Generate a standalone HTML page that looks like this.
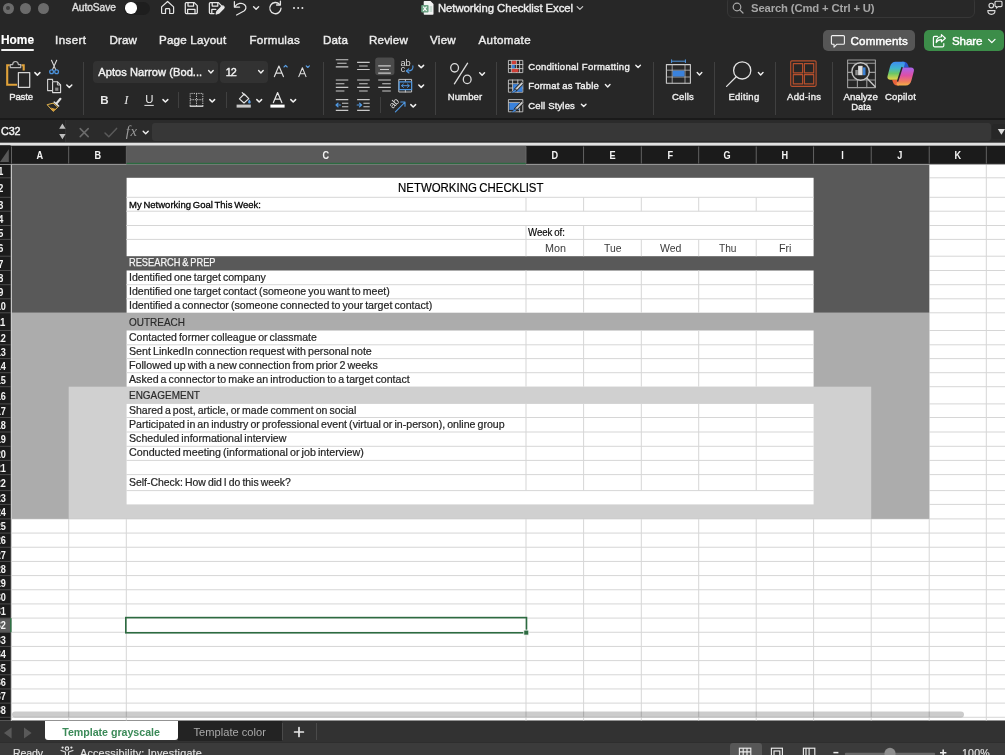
<!DOCTYPE html>
<html><head><meta charset="utf-8"><title>Networking Checklist Excel</title><style>
*{margin:0;padding:0;box-sizing:border-box}
html,body{width:1005px;height:755px;overflow:hidden;background:#272727}
body{position:relative;font-family:"Liberation Sans",sans-serif;-webkit-font-smoothing:antialiased}
.abs{position:absolute}
.grid{position:absolute;left:0;top:0}
.tl{position:absolute;left:0;top:0;width:1005px;height:755px;will-change:transform;pointer-events:none}
.t{position:absolute;white-space:nowrap;line-height:16px;height:16px;font-family:"Liberation Sans",sans-serif}
.ui{font-family:"Liberation Sans",sans-serif}
.dot{position:absolute;width:11px;height:11px;border-radius:50%;background:#6b6b6b}
.tab{font-size:12.4px;color:#ececec;font-weight:bold;letter-spacing:-0.1px}
.lbl{font-size:10.6px;color:#f0f0f0;font-weight:bold;letter-spacing:0px;line-height:14px;height:14px}
.sep{position:absolute;top:62px;width:1px;height:53px;background:#404040}
.h{font-size:10.6px;font-weight:bold;color:#f4f4f4}
.c{font-size:11.4px;color:#2e2e2e;transform-origin:left center;transform:scaleX(0.9);letter-spacing:-0.1px}
.b3{color:#111}
.wk{font-size:10.4px;color:#111}
.day{font-size:11.6px;color:#3a3a3a}
.day,.title{transform:scaleX(0.92)}
.title{font-size:13.4px;color:#000}
.sec{font-size:11.8px;color:#2e2e2e;transform-origin:left center;transform:scaleX(0.9)}
.sec.w{color:#f4f4f4}
</style></head><body>
<!-- ===== TITLE BAR ===== -->
<div class="abs" style="left:0;top:0;width:1005px;height:119px;background:#272727"></div>
<div class="dot" style="left:2.6px;top:2.8px"></div><div class="dot" style="left:20px;top:2.8px"></div><div class="dot" style="left:37.9px;top:2.8px"></div>
<div class="abs" style="left:6.2px;top:6.4px;width:3.8px;height:3.8px;border-radius:50%;background:#3c3c3c"></div>
<div class="abs" style="left:124px;top:1.5px;width:26px;height:13px;border-radius:7px;background:#1e1e1e"></div>
<div class="abs" style="left:125.3px;top:2.3px;width:11.4px;height:11.4px;border-radius:50%;background:#fff"></div>
<svg class="abs" style="left:0;top:0" width="1005" height="56" viewBox="0 0 1005 56" fill="none" stroke="#e6e6e6" stroke-width="1.25" stroke-linecap="round" stroke-linejoin="round">
  <!-- home -->
  <path d="M161.6 6.9 L167.6 1.5 L173.6 6.9 V12.5 a1 1 0 0 1 -1 1 H169.7 V9.5 a0.8 0.8 0 0 0 -0.8 -0.8 h-2.6 a0.8 0.8 0 0 0 -0.8 0.8 V13.5 H162.6 a1 1 0 0 1 -1 -1 Z" stroke-width="1.2"/>
  <!-- save -->
  <path d="M186.3 2.6 h8 l3 3 v7 a1 1 0 0 1 -1 1 h-10 a1 1 0 0 1 -1 -1 v-9 a1 1 0 0 1 1 -1 Z"/>
  <path d="M188 2.8 v3.2 h5.6 v-3.2 M187.6 13.4 v-4 h7.4 v4"/>
  <!-- save as -->
  <path d="M214 13.6 h-3.6 a1 1 0 0 1 -1 -1 v-9 a1 1 0 0 1 1 -1 h8 l3 3 v2.2"/>
  <path d="M212.2 2.8 v3.2 h5.6 v-3.2 M211.8 13.4 v-4 h4"/>
  <path d="M216.2 14 l0.7 -2.6 l5 -5 a1.2 1.2 0 0 1 1.8 1.8 l-5 5 Z" fill="#e6e6e6"/>
  <!-- undo -->
  <path d="M234.4 1.6 v5.4 h5.2" stroke-width="1.25"/>
  <path d="M234.8 6.8 c2.4 -3.6 7.2 -4.6 9.8 -2 c2.2 2.2 1.4 4.6 -0.6 6.2 l-7.4 4" stroke-width="1.25"/>
  <path d="M253.6 6.8 l2.5 2.5 l2.5 -2.5" stroke-width="1.4"/>
  <!-- redo -->
  <path d="M279.6 4.4 a5.6 5.6 0 1 0 1.4 3.8" stroke-width="1.3"/>
  <path d="M280.4 1.2 v3.8 h-3.8" stroke-width="1.3"/>
</svg>
<div class="abs" style="left:292.5px;top:6.8px;width:2.4px;height:2.4px;border-radius:50%;background:#e6e6e6;box-shadow:4.2px 0 0 #e6e6e6,8.4px 0 0 #e6e6e6"></div>

<!-- doc title -->
<svg class="abs" style="left:420px;top:0px" width="16" height="16" viewBox="0 0 16 16">
  <path d="M4.5 1 h6 l3 3 v10 a0.8 0.8 0 0 1 -0.8 0.8 h-8.2 a0.8 0.8 0 0 1 -0.8 -0.8 v-12.2 a0.8 0.8 0 0 1 0.8 -0.8Z" fill="#f3f3f3"/>
  <rect x="1.2" y="5" width="7.4" height="7.4" rx="1" fill="#6aa283"/>
  <path d="M3.2 6.6 l3.4 4.2 M6.6 6.6 l-3.4 4.2" stroke="#fff" stroke-width="1.1"/>
  <path d="M9.6 7 h2.6 M9.6 9 h2.6 M9.6 11 h2.6" stroke="#9cc4ae" stroke-width="0.9"/>
</svg>
<svg class="abs" style="left:574.6px;top:3.2px" width="10" height="10" viewBox="0 0 10 10" fill="none" stroke="#cfcfcf" stroke-width="1.15" stroke-linecap="round" stroke-linejoin="round"><path d="M2.1 3.7 l2.8 2.7 l2.8 -2.7"/></svg>

<!-- search -->
<div class="abs" style="left:727px;top:-4px;width:248px;height:21.6px;border-radius:6px;background:#282828;border:1px solid #373737"></div>
<svg class="abs" style="left:731px;top:1px" width="14" height="14" viewBox="0 0 14 14" fill="none" stroke="#a9a9a9" stroke-width="1.2" stroke-linecap="round"><circle cx="6" cy="6" r="3.8"/><path d="M8.8 8.8 l3.2 3.2"/></svg>
<!-- people icon -->
<svg class="abs" style="left:985px;top:0px" width="20" height="18" viewBox="985 0 20 18" fill="none" stroke="#dadada" stroke-width="1.15" stroke-linecap="round" stroke-linejoin="round"><circle cx="991.3" cy="5.6" r="2.3"/><path d="M987.8 10.6 h7.2 c0 2.4 -1.4 3.8 -3.6 3.8 s-3.6 -1.4 -3.6 -3.8 Z"/><path d="M996 1.2 h5 a1 1 0 0 1 1 1 v3.4 a1 1 0 0 1 -1 1 h-3 l-1.6 1.6 v-1.6 h-0.4 a1 1 0 0 1 -1 -1 v-3.4 a1 1 0 0 1 1 -1 Z" fill="#272727"/></svg>

<!-- ===== RIBBON TABS ===== -->
<div class="abs" style="left:1px;top:48.6px;width:33px;height:2.4px;border-radius:1.2px;background:#f2f2f2"></div>
<!-- comments / share -->
<div class="abs" style="left:822.6px;top:30.4px;width:92.6px;height:20.8px;border-radius:5px;background:#565656"></div>
<svg class="abs" style="left:830px;top:33.5px" width="16" height="15" viewBox="0 0 16 15" fill="none" stroke="#f2f2f2" stroke-width="1.1" stroke-linejoin="round"><path d="M2.4 1.6 h11 a1 1 0 0 1 1 1 v6.6 a1 1 0 0 1 -1 1 h-6.4 l-3 3 v-3 h-1.6 a1 1 0 0 1 -1 -1 v-6.6 a1 1 0 0 1 1 -1 Z"/></svg>
<div class="abs" style="left:924.4px;top:30.4px;width:79.2px;height:20.8px;border-radius:5px;background:#3c8d49"></div>
<svg class="abs" style="left:931px;top:33px" width="17" height="16" viewBox="0 0 17 16" fill="none" stroke="#fff" stroke-width="1.15" stroke-linecap="round" stroke-linejoin="round"><path d="M6.4 3.4 h-2.8 a1.2 1.2 0 0 0 -1.2 1.2 v8 a1.2 1.2 0 0 0 1.2 1.2 h8 a1.2 1.2 0 0 0 1.2 -1.2 v-2"/><path d="M10.4 1.6 l4 3.6 l-4 3.6 v-2.2 c-2.8 0 -4.2 1 -5.2 3 c0 -3.4 1.8 -5.6 5.2 -5.8 Z"/></svg>
<svg class="abs" style="left:987px;top:36px" width="10" height="10" viewBox="0 0 10 10" fill="none" stroke="#fff" stroke-width="1.3" stroke-linecap="round" stroke-linejoin="round"><path d="M1.6 3.4 l3.2 3.2 l3.2 -3.2"/></svg>
<!-- ===== RIBBON ===== -->
<!-- separators -->
<div class="sep" style="left:83px"></div><div class="sep" style="left:323px"></div><div class="sep" style="left:435px"></div><div class="sep" style="left:496px"></div><div class="sep" style="left:653px"></div><div class="sep" style="left:714px"></div><div class="sep" style="left:775px"></div><div class="sep" style="left:832px"></div>
<div class="sep" style="left:178px;top:92px;height:16px"></div><div class="sep" style="left:226px;top:92px;height:16px"></div><div class="sep" style="left:380px;top:97px;height:16px"></div>

<svg class="abs" style="left:0;top:50px" width="1005" height="70" viewBox="0 50 1005 70" fill="none" stroke-linecap="round" stroke-linejoin="round">
  <!-- paste clipboard -->
  <path d="M9.8 65.2 H7.2 V84.8 H17 M21.4 65.2 H23.7 V70.6" stroke="#e0a23a" stroke-width="2.1" stroke-linecap="butt" stroke-linejoin="miter"/>
  <path d="M10.3 67.6 V64.6 H12.7 C12.7 62.5 13.8 61.5 15.5 61.5 C17.2 61.5 18.3 62.5 18.3 64.6 H20.7 V67.6 Z" stroke="#b9b9b9" stroke-width="1.2" fill="#272727"/>
  <rect x="18.4" y="72.5" width="11.3" height="14.8" stroke="#d4d4d4" stroke-width="1.25" fill="#272727"/>
  <path d="M34.9 72.6 l2.5 2.5 l2.5 -2.5" stroke="#f0f0f0" stroke-width="1.5"/>
  <!-- scissors -->
  <path d="M51.5 60.2 l4.2 9.4 M56.7 60.2 l-4.2 9.4" stroke="#dadada" stroke-width="1.1"/>
  <circle cx="51.6" cy="71.8" r="1.9" stroke="#4a90d9" stroke-width="1.3"/><circle cx="56.6" cy="71.8" r="1.9" stroke="#4a90d9" stroke-width="1.3"/>
  <!-- copy -->
  <path d="M51.8 90.6 h-4.2 v-11.2 h5 v1.6" stroke="#d0d0d0" stroke-width="1.1"/>
  <path d="M52.6 81.8 h5 l3 3 v7.8 h-8 Z" stroke="#dcdcdc" stroke-width="1.1" fill="#272727"/>
  <path d="M57.4 82 v3 h3" stroke="#dcdcdc" stroke-width="0.9"/>
  <rect x="55.2" y="87.6" width="3.2" height="3.2" fill="#8a8a8a" stroke="none"/>
  <path d="M66.8 85 l2.5 2.5 l2.5 -2.5" stroke="#f0f0f0" stroke-width="1.5"/>
  <!-- format painter -->
  <path d="M60.4 98.8 l-3.8 4.6" stroke="#e2e2e2" stroke-width="2.2"/>
  <path d="M54.2 102.2 l4.4 3.8" stroke="#e2e2e2" stroke-width="1.6"/>
  <path d="M53.4 103.4 l4.4 3.8 l-4.6 4.2 l-5.8 -6.4 Z" stroke="#e5b64e" stroke-width="1" fill="#272727"/>
  <path d="M50.6 107.4 l5 1.6 l-2.4 2.2 Z" fill="#e0a23a" stroke="none"/>

  <!-- grow/shrink font -->
  <path d="M274.4 76.6 l4.5 -10.6 l4.5 10.6 M276 73.2 h5.8" stroke="#dedede" stroke-width="1.2"/>
  <path d="M284 67 l1.6 -1.7 l1.6 1.7" stroke="#5aa0e6" stroke-width="1.1"/>
  <path d="M298.8 76.6 l3.6 -8.8 l3.6 8.8 M300 73.8 h4.8" stroke="#dedede" stroke-width="1.1"/>
  <path d="M306.2 65.8 l1.6 1.7 l1.6 -1.7" stroke="#5aa0e6" stroke-width="1.1"/>
  <!-- underline bar under U -->
  <path d="M144.8 105.4 h8.6" stroke="#e6e6e6" stroke-width="1"/>
  <path d="M163 99.6 l2.4 2.4 l2.4 -2.4" stroke="#f0f0f0" stroke-width="1.5"/>
  <!-- borders icon -->
  <path d="M190.2 106 V93.4 H202.8 V106 M196.5 93.4 v12.6 M190.2 99.7 h12.6" stroke="#c2c2c2" stroke-width="1" stroke-dasharray="1.3 1" stroke-linecap="butt"/>
  <path d="M189.7 106.2 h13.6" stroke="#d8d8d8" stroke-width="1.4" stroke-linecap="butt"/>
  <path d="M209.8 99.6 l2.4 2.4 l2.4 -2.4" stroke="#f0f0f0" stroke-width="1.5"/>
  <!-- fill bucket -->
  <path d="M239.4 98.8 l4.8 -4.8 l4.6 4.6 l-4.8 4.4 Z" stroke="#e6e6e6" stroke-width="1.1"/>
  <path d="M242.2 92.6 l2.4 2.4" stroke="#e6e6e6" stroke-width="1.1"/>
  <path d="M249.4 99.6 c0.9 1.2 1.3 2 1.3 2.6 a1.3 1.3 0 0 1 -2.6 0 c0 -0.6 0.4 -1.4 1.3 -2.6Z" fill="#5aa0e6" stroke="none"/>
  <rect x="236.6" y="104.6" width="14.2" height="3" fill="#c8c8c8" stroke="none"/>
  <path d="M256.8 99.6 l2.4 2.4 l2.4 -2.4" stroke="#f0f0f0" stroke-width="1.5"/>
  <!-- font colour -->
  <path d="M273.4 102.6 l4.2 -10 l4.2 10 M275 99.2 h5.2" stroke="#e6e6e6" stroke-width="1.2"/>
  <rect x="270.4" y="104.6" width="14.2" height="3" fill="#ffffff" stroke="none"/>
  <path d="M290.8 99.6 l2.4 2.4 l2.4 -2.4" stroke="#f0f0f0" stroke-width="1.5"/>

  <!-- alignment row1 -->
  <g stroke="#c9c9c9" stroke-width="1.1" stroke-linecap="butt">
    <path d="M335.8 59.7 h12.5 M337.2 63.3 h9.4 M335.8 66.9 h12.5"/>
    <path d="M357.1 62.4 h12.6 M359.1 66 h8.6 M357.1 69.5 h12.6"/>
  </g>
  <rect x="375.2" y="57.4" width="19.2" height="17.8" rx="3" fill="#4b4b4b" stroke="none"/>
  <g stroke="#c9c9c9" stroke-width="1.1" stroke-linecap="butt">
    <path d="M378.2 65.9 h12.6 M380 69.5 h9 M378.2 73.1 h12.6"/>
  </g>
  <path d="M418.8 65.4 l2.4 2.4 l2.4 -2.4" stroke="#f0f0f0" stroke-width="1.5"/>
  <path d="M412.9 65.8 c0.5 3.4 -1.2 5.4 -5.6 5.2" stroke="#4f97e0" stroke-width="1.15"/>
  <path d="M408.8 68.8 l-2.4 2.2 l2.6 2" stroke="#4f97e0" stroke-width="1.15"/>
  <!-- row2 -->
  <g stroke="#c9c9c9" stroke-width="1.1" stroke-linecap="butt">
    <path d="M335.8 80 h12.5 M335.8 83.7 h8.6 M335.8 87.4 h12.5 M335.8 91 h8.6"/>
    <path d="M357.1 80 h12.6 M359.1 83.7 h8.6 M357.1 87.4 h12.6 M359.1 91 h8.6"/>
    <path d="M378.2 80 h12.6 M382.2 83.7 h8.6 M378.2 87.4 h12.6 M382.2 91 h8.6"/>
  </g>
  <rect x="399.2" y="79.4" width="12.4" height="12.6" stroke="#c4c4c4" stroke-width="1"/>
  <path d="M405.4 79.4 v12.6" stroke="#c4c4c4" stroke-width="1"/>
  <rect x="399.2" y="81.8" width="12.4" height="7.8" fill="#272727" stroke="#4f97e0" stroke-width="1.15"/>
  <path d="M401.6 85.7 h7.6 M403.4 84 l-1.8 1.7 l1.8 1.7 M407.4 84 l1.8 1.7 l-1.8 1.7" stroke="#4f97e0" stroke-width="1"/>
  <path d="M418.8 85 l2.4 2.4 l2.4 -2.4" stroke="#f0f0f0" stroke-width="1.5"/>
  <!-- row3 -->
  <g stroke="#c9c9c9" stroke-width="1.1" stroke-linecap="butt">
    <path d="M335.8 99.6 h12.5 M342 103.2 h6.3 M342 106.8 h6.3 M335.8 110.4 h12.5"/>
    <path d="M357.1 99.6 h12.6 M363.4 103.2 h6.3 M363.4 106.8 h6.3 M357.1 110.4 h12.6"/>
  </g>
  <path d="M340.4 105 h-4.4 M338 103.2 l-2 1.8 l2 1.8" stroke="#4f97e0" stroke-width="1.2"/>
  <path d="M357.2 105 h4.4 M359.6 103.2 l2 1.8 l-2 1.8" stroke="#4f97e0" stroke-width="1.2"/>
  <path d="M395.4 111.8 l9.4 -9.4 M400.8 102 h4.2 v4.2" stroke="#4f97e0" stroke-width="1.15"/>
  <path d="M410.8 104.6 l2.4 2.4 l2.4 -2.4" stroke="#f0f0f0" stroke-width="1.5"/>

  <!-- percent -->
  <g stroke="#dcdcdc" stroke-width="1.3"><ellipse cx="454.6" cy="67.8" rx="3.9" ry="4.2"/><ellipse cx="467.2" cy="79.4" rx="3.9" ry="4.2"/><path d="M467.6 63.2 l-13.2 20.6"/></g>
  <path d="M479.7 72.8 l2.4 2.4 l2.4 -2.4" stroke="#f0f0f0" stroke-width="1.5"/>

  <!-- conditional formatting -->
  <g stroke="#c6c6c6" stroke-width="0.9"><rect x="508.8" y="60.4" width="14" height="12.2"/><path d="M511.4 60.4 v12.2 M516.4 60.4 v12.2 M519.6 60.4 v12.2 M508.8 64.5 h14 M508.8 68.6 h14"/></g>
  <rect x="511.8" y="60.9" width="4.4" height="3.2" fill="#cf3f38" stroke="none"/><rect x="511.8" y="69" width="6.6" height="3.2" fill="#cf3f38" stroke="none"/><rect x="511.8" y="64.9" width="3" height="3.3" fill="#3a82dc" stroke="none"/>
  <path d="M635.8 65.2 l2.3 2.3 l2.3 -2.3" stroke="#f0f0f0" stroke-width="1.4"/>
  <!-- format as table -->
  <g stroke="#c6c6c6" stroke-width="0.9"><rect x="508.8" y="80" width="14" height="12.2"/><path d="M512.6 80 v12.2 M517.8 80 v12.2 M508.8 83.8 h14 M508.8 88 h14"/></g>
  <rect x="513.1" y="84.2" width="9.3" height="7.6" fill="#3a82dc" stroke="none"/>
  <path d="M522.6 82.6 l-7.4 7.6" stroke="#272727" stroke-width="3.6" stroke-linecap="butt"/>
  <path d="M522.4 82.8 l-6.6 6.8" stroke="#cfcfcf" stroke-width="1.9" stroke-linecap="butt"/>
  <path d="M516 89.2 l-2.4 1.2 l-2.4 2.4 c1.8 0.4 3.6 -0.2 4.8 -1.6 Z" fill="#4a90e2" stroke="#272727" stroke-width="0.5"/>
  <path d="M605.4 84.6 l2.3 2.3 l2.3 -2.3" stroke="#f0f0f0" stroke-width="1.4"/>
  <!-- cell styles -->
  <g stroke="#c6c6c6" stroke-width="0.9"><rect x="508.8" y="99.6" width="14" height="12.2"/><path d="M508.8 102.4 h14 M519.6 102.4 v9.4"/></g>
  <rect x="509.3" y="102.9" width="9.8" height="7" fill="#3a82dc" stroke="none"/>
  <path d="M522.6 102.2 l-7.4 7.6" stroke="#272727" stroke-width="3.6" stroke-linecap="butt"/>
  <path d="M522.4 102.4 l-6.6 6.8" stroke="#cfcfcf" stroke-width="1.9" stroke-linecap="butt"/>
  <path d="M516 108.8 l-2.4 1.2 l-2.4 2.4 c1.8 0.4 3.6 -0.2 4.8 -1.6 Z" fill="#4a90e2" stroke="#272727" stroke-width="0.5"/>
  <path d="M581.4 104.2 l2.3 2.3 l2.3 -2.3" stroke="#f0f0f0" stroke-width="1.4"/>

  <!-- cells -->
  <path d="M671.6 59.8 v2.8 M685.4 59.8 v2.8 M671.6 61.2 h13.8" stroke="#4f97e0" stroke-width="1"/>
  <g stroke="#cdcdcd" stroke-width="1.1"><rect x="666.4" y="64.6" width="24" height="18.6"/></g><g stroke="#bdbdbd" stroke-width="0.8"><path d="M672.2 64.6 v18.6 M685 64.6 v18.6 M666.4 70.2 h24 M666.4 77 h24"/></g>
  <rect x="672.7" y="70.7" width="11.8" height="5.8" fill="#3a82dc" stroke="none"/>
  <path d="M697.2 72.6 l2.3 2.3 l2.3 -2.3" stroke="#f0f0f0" stroke-width="1.4"/>
  <!-- editing -->
  <g stroke="#e2e2e2" stroke-width="1.3"><circle cx="742.2" cy="70.4" r="8.6"/><path d="M736 77 l-9.4 9.4"/></g>
  <path d="M758.4 72.6 l2.3 2.3 l2.3 -2.3" stroke="#f0f0f0" stroke-width="1.4"/>
  <!-- add-ins -->
  <g stroke="#b8502d" stroke-width="1.15"><rect x="790.7" y="60.9" width="25.4" height="25.4" rx="1.2"/><rect x="793.3" y="63.6" width="9.3" height="9.3"/><rect x="804.4" y="63.6" width="9.3" height="9.3"/><rect x="793.3" y="74.6" width="9.3" height="9.3"/><rect x="804.4" y="74.6" width="9.3" height="9.3"/></g>
  <!-- analyze data -->
  <g stroke="#9c9c9c" stroke-width="1.1"><rect x="847.6" y="60" width="27.8" height="27.6"/><path d="M847.6 63.2 h27.8 M847.6 72.4 h27.8 M847.6 80 h27.8 M857.4 63.2 v24.4 M866.8 63.2 v24.4"/></g>
  <circle cx="860.6" cy="71.5" r="8.7" fill="#272727" stroke="#c4c4c4" stroke-width="1.4"/>
  <path d="M867.2 78.4 l8 8.4" stroke="#c4c4c4" stroke-width="1.5"/>
  <rect x="855.3" y="70" width="2.5" height="5.2" fill="#8f8f8f" stroke="none"/><rect x="858.1" y="65.8" width="4.5" height="9.4" fill="#dedede" stroke="none"/><rect x="862.9" y="67.4" width="2.6" height="7.8" fill="#3b82d6" stroke="none"/>
  <!-- copilot -->
  <defs>
    <linearGradient id="cpL" x1="0" y1="0" x2="0" y2="1"><stop offset="0" stop-color="#3f8df2"/><stop offset="0.35" stop-color="#3fb4cf"/><stop offset="0.65" stop-color="#6cc766"/><stop offset="1" stop-color="#ecd547"/></linearGradient>
    <linearGradient id="cpR" x1="0" y1="0" x2="0" y2="1"><stop offset="0" stop-color="#a765ee"/><stop offset="0.45" stop-color="#de4fa6"/><stop offset="0.8" stop-color="#f0805a"/><stop offset="1" stop-color="#f3b04a"/></linearGradient>
  </defs>
  <path d="M902 61.8 h2 c2.2 0 3.4 1.4 4 3.2 l0.9 2.4 h-3.4 c-1.4 0 -2.2 0.6 -2.8 1.8 Z" fill="#2a55cf" stroke="none"/>
  <path d="M899 85.4 h-2 c-2.2 0 -3.4 -1.4 -4 -3.2 l-0.9 -2.4 h3.4 c1.4 0 2.2 -0.6 2.8 -1.8 Z" fill="#e7633b" stroke="none"/>
  <path d="M895.6 61.8 h7.8 c1.2 0 1.8 0.9 1.4 2.1 l-4.2 13.6 c-0.5 1.5 -1.6 2.3 -3.2 2.3 h-7 c-2.2 0 -3.4 -1.5 -2.9 -3.5 l2.5 -9.5 c0.9 -3.2 2.8 -5 5.6 -5 Z" fill="url(#cpL)" stroke="none"/>
  <path d="M905.6 67.4 h5.4 c2.2 0 3.4 1.5 2.9 3.5 l-2.5 9.5 c-0.9 3.2 -2.8 5 -5.6 5 h-7.8 c-1.2 0 -1.8 -0.9 -1.4 -2.1 l4.2 -13.6 c0.5 -1.5 1.6 -2.3 3.2 -2.3 Z" fill="url(#cpR)" stroke="none"/>
  <path d="M902.0 67.6 l-4.3 13.4" stroke="#272727" stroke-width="1.5"/>
</svg>

<!-- font boxes -->
<div class="abs" style="left:93px;top:61px;width:125px;height:21.5px;border-radius:4px;background:#323232"></div>
<div class="abs" style="left:220px;top:61px;width:47.5px;height:21.5px;border-radius:4px;background:#323232"></div>
<svg class="abs" style="left:206px;top:67px" width="10" height="10" viewBox="0 0 10 10" fill="none" stroke="#f0f0f0" stroke-width="1.4" stroke-linecap="round" stroke-linejoin="round"><path d="M2.6 3.6 l2.3 2.3 l2.3 -2.3"/></svg>
<svg class="abs" style="left:255.5px;top:67px" width="10" height="10" viewBox="0 0 10 10" fill="none" stroke="#f0f0f0" stroke-width="1.4" stroke-linecap="round" stroke-linejoin="round"><path d="M2.6 3.6 l2.3 2.3 l2.3 -2.3"/></svg>

<!-- labels -->

<!-- ===== FORMULA BAR ===== -->
<div class="abs" style="left:0;top:118px;width:1005px;height:1.6px;background:#1a1a1a"></div>
<div class="abs" style="left:0;top:119.6px;width:1005px;height:23px;background:#2b2b2b"></div>
<div class="abs" style="left:0;top:120.4px;width:66px;height:21.4px;background:#252525;border-right:1px solid #333"></div>
<svg class="abs" style="left:58px;top:122px" width="9" height="19" viewBox="0 0 9 19"><path d="M1.2 6.8 L4.4 1.6 L7.6 6.8 Z M1.2 12 L4.4 17.2 L7.6 12 Z" fill="#bdbdbd"/></svg>
<svg class="abs" style="left:76px;top:124px" width="80" height="18" viewBox="0 0 80 18" fill="none" stroke-linecap="round" stroke-linejoin="round">
  <path d="M4.2 4.6 l8 8 M12.2 4.6 l-8 8" stroke="#6b6b6b" stroke-width="1.5"/>
  <path d="M29 9 l3.8 3.8 l7.8 -8.4" stroke="#5a5a5a" stroke-width="1.5"/>
  <path d="M67.2 7.2 l2.5 2.5 l2.5 -2.5" stroke="#f0f0f0" stroke-width="1.4"/>
</svg>
<div class="abs" style="left:151.5px;top:123.4px;width:839.5px;height:17.4px;border-radius:3px;background:#373737"></div>
<div class="abs" style="left:991.6px;top:124.2px;width:16px;height:14.6px;border-radius:2.5px;background:#272727"></div>
<svg class="abs" style="left:992px;top:124px" width="13" height="16" viewBox="0 0 13 16"><path d="M5.8 5 h7.2 L9.4 10.8 Z" fill="#dcdcdc"/></svg>
<svg class="grid" width="1005" height="755" viewBox="0 0 1005 755" shape-rendering="geometricPrecision"><rect x="0.0" y="145.0" width="1005.0" height="575.5" fill="#ffffff"/><rect x="11.0" y="163.80" width="994.0" height="1" fill="#d6d6d6"/><rect x="11.0" y="177.30" width="994.0" height="1" fill="#d6d6d6"/><rect x="11.0" y="196.80" width="994.0" height="1" fill="#d6d6d6"/><rect x="11.0" y="210.70" width="994.0" height="1" fill="#d6d6d6"/><rect x="11.0" y="225.00" width="994.0" height="1" fill="#d6d6d6"/><rect x="11.0" y="238.90" width="994.0" height="1" fill="#d6d6d6"/><rect x="11.0" y="255.70" width="994.0" height="1" fill="#d6d6d6"/><rect x="11.0" y="270.00" width="994.0" height="1" fill="#d6d6d6"/><rect x="11.0" y="284.20" width="994.0" height="1" fill="#d6d6d6"/><rect x="11.0" y="298.30" width="994.0" height="1" fill="#d6d6d6"/><rect x="11.0" y="312.30" width="994.0" height="1" fill="#d6d6d6"/><rect x="11.0" y="330.00" width="994.0" height="1" fill="#d6d6d6"/><rect x="11.0" y="344.30" width="994.0" height="1" fill="#d6d6d6"/><rect x="11.0" y="358.10" width="994.0" height="1" fill="#d6d6d6"/><rect x="11.0" y="372.20" width="994.0" height="1" fill="#d6d6d6"/><rect x="11.0" y="386.20" width="994.0" height="1" fill="#d6d6d6"/><rect x="11.0" y="403.40" width="994.0" height="1" fill="#d6d6d6"/><rect x="11.0" y="417.00" width="994.0" height="1" fill="#d6d6d6"/><rect x="11.0" y="431.50" width="994.0" height="1" fill="#d6d6d6"/><rect x="11.0" y="445.80" width="994.0" height="1" fill="#d6d6d6"/><rect x="11.0" y="459.90" width="994.0" height="1" fill="#d6d6d6"/><rect x="11.0" y="474.10" width="994.0" height="1" fill="#d6d6d6"/><rect x="11.0" y="490.10" width="994.0" height="1" fill="#d6d6d6"/><rect x="11.0" y="503.90" width="994.0" height="1" fill="#d6d6d6"/><rect x="11.0" y="518.40" width="994.0" height="1" fill="#d6d6d6"/><rect x="11.0" y="532.57" width="994.0" height="1" fill="#d6d6d6"/><rect x="11.0" y="546.74" width="994.0" height="1" fill="#d6d6d6"/><rect x="11.0" y="560.91" width="994.0" height="1" fill="#d6d6d6"/><rect x="11.0" y="575.08" width="994.0" height="1" fill="#d6d6d6"/><rect x="11.0" y="589.25" width="994.0" height="1" fill="#d6d6d6"/><rect x="11.0" y="603.42" width="994.0" height="1" fill="#d6d6d6"/><rect x="11.0" y="617.59" width="994.0" height="1" fill="#d6d6d6"/><rect x="11.0" y="631.76" width="994.0" height="1" fill="#d6d6d6"/><rect x="11.0" y="645.93" width="994.0" height="1" fill="#d6d6d6"/><rect x="11.0" y="660.10" width="994.0" height="1" fill="#d6d6d6"/><rect x="11.0" y="674.27" width="994.0" height="1" fill="#d6d6d6"/><rect x="11.0" y="688.44" width="994.0" height="1" fill="#d6d6d6"/><rect x="11.0" y="702.61" width="994.0" height="1" fill="#d6d6d6"/><rect x="11.0" y="716.78" width="994.0" height="1" fill="#d6d6d6"/><rect x="11.00" y="164.0" width="1" height="556.5" fill="#d6d6d6"/><rect x="68.20" y="164.0" width="1" height="556.5" fill="#d6d6d6"/><rect x="125.80" y="164.0" width="1" height="556.5" fill="#d6d6d6"/><rect x="525.50" y="164.0" width="1" height="556.5" fill="#d6d6d6"/><rect x="583.10" y="164.0" width="1" height="556.5" fill="#d6d6d6"/><rect x="640.80" y="164.0" width="1" height="556.5" fill="#d6d6d6"/><rect x="698.20" y="164.0" width="1" height="556.5" fill="#d6d6d6"/><rect x="755.70" y="164.0" width="1" height="556.5" fill="#d6d6d6"/><rect x="813.10" y="164.0" width="1" height="556.5" fill="#d6d6d6"/><rect x="870.70" y="164.0" width="1" height="556.5" fill="#d6d6d6"/><rect x="928.70" y="164.0" width="1" height="556.5" fill="#d6d6d6"/><rect x="985.80" y="164.0" width="1" height="556.5" fill="#d6d6d6"/><rect x="11.5" y="164.3" width="917.7" height="148.5" fill="#595959"/><rect x="11.5" y="312.8" width="917.7" height="206.1" fill="#acacac"/><rect x="68.7" y="386.7" width="802.5" height="132.2" fill="#d0d0d0"/><rect x="126.6" y="177.8" width="687.0" height="78.4" fill="#ffffff"/><rect x="126.6" y="270.5" width="687.0" height="42.3" fill="#ffffff"/><rect x="126.6" y="330.5" width="687.0" height="56.2" fill="#ffffff"/><rect x="126.6" y="403.9" width="687.0" height="100.5" fill="#ffffff"/><rect x="126.3" y="196.80" width="687.3" height="1" fill="#d6d6d6"/><rect x="126.3" y="210.70" width="687.3" height="1" fill="#d6d6d6"/><rect x="126.3" y="225.00" width="687.3" height="1" fill="#d6d6d6"/><rect x="126.3" y="238.90" width="687.3" height="1" fill="#d6d6d6"/><rect x="525.50" y="197.3" width="1" height="13.9" fill="#d6d6d6"/><rect x="583.10" y="197.3" width="1" height="13.9" fill="#d6d6d6"/><rect x="640.80" y="197.3" width="1" height="13.9" fill="#d6d6d6"/><rect x="698.20" y="197.3" width="1" height="13.9" fill="#d6d6d6"/><rect x="755.70" y="197.3" width="1" height="13.9" fill="#d6d6d6"/><rect x="525.50" y="225.5" width="1" height="30.7" fill="#d6d6d6"/><rect x="583.10" y="225.5" width="1" height="30.7" fill="#d6d6d6"/><rect x="640.80" y="239.4" width="1" height="16.8" fill="#d6d6d6"/><rect x="698.20" y="239.4" width="1" height="16.8" fill="#d6d6d6"/><rect x="755.70" y="239.4" width="1" height="16.8" fill="#d6d6d6"/><rect x="126.3" y="284.20" width="687.3" height="1" fill="#d6d6d6"/><rect x="126.3" y="298.30" width="687.3" height="1" fill="#d6d6d6"/><rect x="525.50" y="270.5" width="1" height="42.3" fill="#d6d6d6"/><rect x="583.10" y="270.5" width="1" height="42.3" fill="#d6d6d6"/><rect x="640.80" y="270.5" width="1" height="42.3" fill="#d6d6d6"/><rect x="698.20" y="270.5" width="1" height="42.3" fill="#d6d6d6"/><rect x="755.70" y="270.5" width="1" height="42.3" fill="#d6d6d6"/><rect x="126.3" y="344.30" width="687.3" height="1" fill="#d6d6d6"/><rect x="126.3" y="358.10" width="687.3" height="1" fill="#d6d6d6"/><rect x="126.3" y="372.20" width="687.3" height="1" fill="#d6d6d6"/><rect x="525.50" y="330.5" width="1" height="56.2" fill="#d6d6d6"/><rect x="583.10" y="330.5" width="1" height="56.2" fill="#d6d6d6"/><rect x="640.80" y="330.5" width="1" height="56.2" fill="#d6d6d6"/><rect x="698.20" y="330.5" width="1" height="56.2" fill="#d6d6d6"/><rect x="755.70" y="330.5" width="1" height="56.2" fill="#d6d6d6"/><rect x="126.3" y="417.00" width="687.3" height="1" fill="#d6d6d6"/><rect x="126.3" y="431.50" width="687.3" height="1" fill="#d6d6d6"/><rect x="126.3" y="445.80" width="687.3" height="1" fill="#d6d6d6"/><rect x="126.3" y="459.90" width="687.3" height="1" fill="#d6d6d6"/><rect x="126.3" y="474.10" width="687.3" height="1" fill="#d6d6d6"/><rect x="126.3" y="490.10" width="687.3" height="1" fill="#d6d6d6"/><rect x="525.50" y="403.9" width="1" height="86.7" fill="#d6d6d6"/><rect x="583.10" y="403.9" width="1" height="86.7" fill="#d6d6d6"/><rect x="640.80" y="403.9" width="1" height="86.7" fill="#d6d6d6"/><rect x="698.20" y="403.9" width="1" height="86.7" fill="#d6d6d6"/><rect x="755.70" y="403.9" width="1" height="86.7" fill="#d6d6d6"/><rect x="125.8" y="617.6" width="400.7" height="15.2" fill="none" stroke="#2d6b41" stroke-width="1.6"/><rect x="523.8" y="630.1" width="5" height="5" fill="#2d6b41" stroke="#fff" stroke-width="0.8"/><rect x="12" y="711.4" width="952" height="6" rx="3" fill="#000" fill-opacity="0.2"/><rect x="0.0" y="145.3" width="1005.0" height="18.7" fill="#1b1b1b"/><rect x="126.3" y="145.3" width="399.7" height="18.7" fill="#5a5a5a"/><rect x="126.3" y="162.80" width="399.7" height="1.4" fill="#2c6a40"/><rect x="11.05" y="146.5" width="0.9" height="17.0" fill="#6a6a6a"/><rect x="68.25" y="146.5" width="0.9" height="17.0" fill="#6a6a6a"/><rect x="125.85" y="146.5" width="0.9" height="17.0" fill="#6a6a6a"/><rect x="525.55" y="146.5" width="0.9" height="17.0" fill="#6a6a6a"/><rect x="583.15" y="146.5" width="0.9" height="17.0" fill="#6a6a6a"/><rect x="640.85" y="146.5" width="0.9" height="17.0" fill="#6a6a6a"/><rect x="698.25" y="146.5" width="0.9" height="17.0" fill="#6a6a6a"/><rect x="755.75" y="146.5" width="0.9" height="17.0" fill="#6a6a6a"/><rect x="813.15" y="146.5" width="0.9" height="17.0" fill="#6a6a6a"/><rect x="870.75" y="146.5" width="0.9" height="17.0" fill="#6a6a6a"/><rect x="928.75" y="146.5" width="0.9" height="17.0" fill="#6a6a6a"/><rect x="985.85" y="146.5" width="0.9" height="17.0" fill="#6a6a6a"/><rect x="0.0" y="163.85" width="126.3" height="0.9" fill="#9a9a9a"/><rect x="526.0" y="163.85" width="479.0" height="0.9" fill="#9a9a9a"/><rect x="0.0" y="142.7" width="1005.0" height="2.8" fill="#e2e2e2"/><rect x="0.0" y="164.7" width="10.9" height="555.8" fill="#1b1b1b"/><rect x="0.0" y="618.1" width="10.9" height="14.2" fill="#5a5a5a"/><rect x="0.0" y="177.30" width="10.9" height="1.0" fill="#4c4c4c"/><rect x="0.0" y="196.80" width="10.9" height="1.0" fill="#4c4c4c"/><rect x="0.0" y="210.70" width="10.9" height="1.0" fill="#4c4c4c"/><rect x="0.0" y="225.00" width="10.9" height="1.0" fill="#4c4c4c"/><rect x="0.0" y="238.90" width="10.9" height="1.0" fill="#4c4c4c"/><rect x="0.0" y="255.70" width="10.9" height="1.0" fill="#4c4c4c"/><rect x="0.0" y="270.00" width="10.9" height="1.0" fill="#4c4c4c"/><rect x="0.0" y="284.20" width="10.9" height="1.0" fill="#4c4c4c"/><rect x="0.0" y="298.30" width="10.9" height="1.0" fill="#4c4c4c"/><rect x="0.0" y="312.30" width="10.9" height="1.0" fill="#4c4c4c"/><rect x="0.0" y="330.00" width="10.9" height="1.0" fill="#4c4c4c"/><rect x="0.0" y="344.30" width="10.9" height="1.0" fill="#4c4c4c"/><rect x="0.0" y="358.10" width="10.9" height="1.0" fill="#4c4c4c"/><rect x="0.0" y="372.20" width="10.9" height="1.0" fill="#4c4c4c"/><rect x="0.0" y="386.20" width="10.9" height="1.0" fill="#4c4c4c"/><rect x="0.0" y="403.40" width="10.9" height="1.0" fill="#4c4c4c"/><rect x="0.0" y="417.00" width="10.9" height="1.0" fill="#4c4c4c"/><rect x="0.0" y="431.50" width="10.9" height="1.0" fill="#4c4c4c"/><rect x="0.0" y="445.80" width="10.9" height="1.0" fill="#4c4c4c"/><rect x="0.0" y="459.90" width="10.9" height="1.0" fill="#4c4c4c"/><rect x="0.0" y="474.10" width="10.9" height="1.0" fill="#4c4c4c"/><rect x="0.0" y="490.10" width="10.9" height="1.0" fill="#4c4c4c"/><rect x="0.0" y="503.90" width="10.9" height="1.0" fill="#4c4c4c"/><rect x="0.0" y="518.40" width="10.9" height="1.0" fill="#4c4c4c"/><rect x="0.0" y="532.57" width="10.9" height="1.0" fill="#4c4c4c"/><rect x="0.0" y="546.74" width="10.9" height="1.0" fill="#4c4c4c"/><rect x="0.0" y="560.91" width="10.9" height="1.0" fill="#4c4c4c"/><rect x="0.0" y="575.08" width="10.9" height="1.0" fill="#4c4c4c"/><rect x="0.0" y="589.25" width="10.9" height="1.0" fill="#4c4c4c"/><rect x="0.0" y="603.42" width="10.9" height="1.0" fill="#4c4c4c"/><rect x="0.0" y="617.59" width="10.9" height="1.0" fill="#4c4c4c"/><rect x="0.0" y="631.76" width="10.9" height="1.0" fill="#4c4c4c"/><rect x="0.0" y="645.93" width="10.9" height="1.0" fill="#4c4c4c"/><rect x="0.0" y="660.10" width="10.9" height="1.0" fill="#4c4c4c"/><rect x="0.0" y="674.27" width="10.9" height="1.0" fill="#4c4c4c"/><rect x="0.0" y="688.44" width="10.9" height="1.0" fill="#4c4c4c"/><rect x="0.0" y="702.61" width="10.9" height="1.0" fill="#4c4c4c"/><rect x="0.0" y="716.78" width="10.9" height="1.0" fill="#4c4c4c"/><rect x="10.90" y="164.7" width="1.0" height="555.8" fill="#cacaca"/><rect x="10.05" y="618.1" width="1.5" height="14.2" fill="#2f7245"/><rect x="0.0" y="145.3" width="10.6" height="18.7" fill="#1b1b1b"/><path d="M0 162 L8.8 162 L8.8 149.2 Z" fill="#585858"/></svg>
<div class="tl"><div class="t" style="top:147.80px;font-size:10.4px;color:#f4f4f4;font-weight:bold;transform:scaleX(0.88);transform-origin:50% 50%;left:36.24px;">A</div>
<div class="t" style="top:147.80px;font-size:10.4px;color:#f4f4f4;font-weight:bold;transform:scaleX(0.88);transform-origin:50% 50%;left:93.64px;">B</div>
<div class="t" style="top:147.80px;font-size:10.4px;color:#f4f4f4;font-weight:bold;transform:scaleX(0.88);transform-origin:50% 50%;left:322.29px;">C</div>
<div class="t" style="top:147.80px;font-size:10.4px;color:#f4f4f4;font-weight:bold;transform:scaleX(0.88);transform-origin:50% 50%;left:550.94px;">D</div>
<div class="t" style="top:147.80px;font-size:10.4px;color:#f4f4f4;font-weight:bold;transform:scaleX(0.88);transform-origin:50% 50%;left:608.88px;">E</div>
<div class="t" style="top:147.80px;font-size:10.4px;color:#f4f4f4;font-weight:bold;transform:scaleX(0.88);transform-origin:50% 50%;left:666.72px;">F</div>
<div class="t" style="top:147.80px;font-size:10.4px;color:#f4f4f4;font-weight:bold;transform:scaleX(0.88);transform-origin:50% 50%;left:723.31px;">G</div>
<div class="t" style="top:147.80px;font-size:10.4px;color:#f4f4f4;font-weight:bold;transform:scaleX(0.88);transform-origin:50% 50%;left:781.04px;">H</div>
<div class="t" style="top:147.80px;font-size:10.4px;color:#f4f4f4;font-weight:bold;transform:scaleX(0.88);transform-origin:50% 50%;left:840.86px;">I</div>
<div class="t" style="top:147.80px;font-size:10.4px;color:#f4f4f4;font-weight:bold;transform:scaleX(0.88);transform-origin:50% 50%;left:897.21px;">J</div>
<div class="t" style="top:147.80px;font-size:10.4px;color:#f4f4f4;font-weight:bold;transform:scaleX(0.88);transform-origin:50% 50%;left:953.89px;">K</div>
<div class="t" style="top:164.35px;font-size:10.4px;color:#f4f4f4;font-weight:bold;transform:scaleX(0.88);transform-origin:50% 50%;left:-2.09px;">1</div>
<div class="t" style="top:180.85px;font-size:10.4px;color:#f4f4f4;font-weight:bold;transform:scaleX(0.88);transform-origin:50% 50%;left:-2.09px;">2</div>
<div class="t" style="top:197.55px;font-size:10.4px;color:#f4f4f4;font-weight:bold;transform:scaleX(0.88);transform-origin:50% 50%;left:-2.09px;">3</div>
<div class="t" style="top:211.65px;font-size:10.4px;color:#f4f4f4;font-weight:bold;transform:scaleX(0.88);transform-origin:50% 50%;left:-2.09px;">4</div>
<div class="t" style="top:225.75px;font-size:10.4px;color:#f4f4f4;font-weight:bold;transform:scaleX(0.88);transform-origin:50% 50%;left:-2.09px;">5</div>
<div class="t" style="top:241.10px;font-size:10.4px;color:#f4f4f4;font-weight:bold;transform:scaleX(0.88);transform-origin:50% 50%;left:-2.09px;">6</div>
<div class="t" style="top:256.65px;font-size:10.4px;color:#f4f4f4;font-weight:bold;transform:scaleX(0.88);transform-origin:50% 50%;left:-2.09px;">7</div>
<div class="t" style="top:270.90px;font-size:10.4px;color:#f4f4f4;font-weight:bold;transform:scaleX(0.88);transform-origin:50% 50%;left:-2.09px;">8</div>
<div class="t" style="top:285.05px;font-size:10.4px;color:#f4f4f4;font-weight:bold;transform:scaleX(0.88);transform-origin:50% 50%;left:-2.09px;">9</div>
<div class="t" style="top:299.10px;font-size:10.4px;color:#f4f4f4;font-weight:bold;transform:scaleX(0.88);transform-origin:50% 50%;left:-4.98px;">10</div>
<div class="t" style="top:314.95px;font-size:10.4px;color:#f4f4f4;font-weight:bold;transform:scaleX(0.88);transform-origin:50% 50%;left:-4.70px;">11</div>
<div class="t" style="top:330.95px;font-size:10.4px;color:#f4f4f4;font-weight:bold;transform:scaleX(0.88);transform-origin:50% 50%;left:-4.98px;">12</div>
<div class="t" style="top:345.00px;font-size:10.4px;color:#f4f4f4;font-weight:bold;transform:scaleX(0.88);transform-origin:50% 50%;left:-4.98px;">13</div>
<div class="t" style="top:358.95px;font-size:10.4px;color:#f4f4f4;font-weight:bold;transform:scaleX(0.88);transform-origin:50% 50%;left:-4.98px;">14</div>
<div class="t" style="top:373.00px;font-size:10.4px;color:#f4f4f4;font-weight:bold;transform:scaleX(0.88);transform-origin:50% 50%;left:-4.98px;">15</div>
<div class="t" style="top:388.60px;font-size:10.4px;color:#f4f4f4;font-weight:bold;transform:scaleX(0.88);transform-origin:50% 50%;left:-4.98px;">16</div>
<div class="t" style="top:404.00px;font-size:10.4px;color:#f4f4f4;font-weight:bold;transform:scaleX(0.88);transform-origin:50% 50%;left:-4.98px;">17</div>
<div class="t" style="top:418.05px;font-size:10.4px;color:#f4f4f4;font-weight:bold;transform:scaleX(0.88);transform-origin:50% 50%;left:-4.98px;">18</div>
<div class="t" style="top:432.45px;font-size:10.4px;color:#f4f4f4;font-weight:bold;transform:scaleX(0.88);transform-origin:50% 50%;left:-4.98px;">19</div>
<div class="t" style="top:446.65px;font-size:10.4px;color:#f4f4f4;font-weight:bold;transform:scaleX(0.88);transform-origin:50% 50%;left:-4.98px;">20</div>
<div class="t" style="top:460.80px;font-size:10.4px;color:#f4f4f4;font-weight:bold;transform:scaleX(0.88);transform-origin:50% 50%;left:-4.98px;">21</div>
<div class="t" style="top:475.90px;font-size:10.4px;color:#f4f4f4;font-weight:bold;transform:scaleX(0.88);transform-origin:50% 50%;left:-4.98px;">22</div>
<div class="t" style="top:490.80px;font-size:10.4px;color:#f4f4f4;font-weight:bold;transform:scaleX(0.88);transform-origin:50% 50%;left:-4.98px;">23</div>
<div class="t" style="top:504.95px;font-size:10.4px;color:#f4f4f4;font-weight:bold;transform:scaleX(0.88);transform-origin:50% 50%;left:-4.98px;">24</div>
<div class="t" style="top:519.28px;font-size:10.4px;color:#f4f4f4;font-weight:bold;transform:scaleX(0.88);transform-origin:50% 50%;left:-4.98px;">25</div>
<div class="t" style="top:533.45px;font-size:10.4px;color:#f4f4f4;font-weight:bold;transform:scaleX(0.88);transform-origin:50% 50%;left:-4.98px;">26</div>
<div class="t" style="top:547.62px;font-size:10.4px;color:#f4f4f4;font-weight:bold;transform:scaleX(0.88);transform-origin:50% 50%;left:-4.98px;">27</div>
<div class="t" style="top:561.79px;font-size:10.4px;color:#f4f4f4;font-weight:bold;transform:scaleX(0.88);transform-origin:50% 50%;left:-4.98px;">28</div>
<div class="t" style="top:575.96px;font-size:10.4px;color:#f4f4f4;font-weight:bold;transform:scaleX(0.88);transform-origin:50% 50%;left:-4.98px;">29</div>
<div class="t" style="top:590.13px;font-size:10.4px;color:#f4f4f4;font-weight:bold;transform:scaleX(0.88);transform-origin:50% 50%;left:-4.98px;">30</div>
<div class="t" style="top:604.30px;font-size:10.4px;color:#f4f4f4;font-weight:bold;transform:scaleX(0.88);transform-origin:50% 50%;left:-4.98px;">31</div>
<div class="t" style="top:618.47px;font-size:10.4px;color:#f4f4f4;font-weight:bold;transform:scaleX(0.88);transform-origin:50% 50%;left:-4.98px;">32</div>
<div class="t" style="top:632.64px;font-size:10.4px;color:#f4f4f4;font-weight:bold;transform:scaleX(0.88);transform-origin:50% 50%;left:-4.98px;">33</div>
<div class="t" style="top:646.81px;font-size:10.4px;color:#f4f4f4;font-weight:bold;transform:scaleX(0.88);transform-origin:50% 50%;left:-4.98px;">34</div>
<div class="t" style="top:660.98px;font-size:10.4px;color:#f4f4f4;font-weight:bold;transform:scaleX(0.88);transform-origin:50% 50%;left:-4.98px;">35</div>
<div class="t" style="top:675.15px;font-size:10.4px;color:#f4f4f4;font-weight:bold;transform:scaleX(0.88);transform-origin:50% 50%;left:-4.98px;">36</div>
<div class="t" style="top:689.32px;font-size:10.4px;color:#f4f4f4;font-weight:bold;transform:scaleX(0.88);transform-origin:50% 50%;left:-4.98px;">37</div>
<div class="t" style="top:703.49px;font-size:10.4px;color:#f4f4f4;font-weight:bold;transform:scaleX(0.88);transform-origin:50% 50%;left:-4.98px;">38</div>
<div class="t" style="top:179.63px;font-size:12.6px;color:#000;-webkit-text-stroke:0.2px #000;transform:scaleX(0.9082);transform-origin:0 50%;left:397.50px;word-spacing:-0.8px;">NETWORKING CHECKLIST</div>
<div class="t" style="top:196.80px;font-size:9.8px;color:#050505;-webkit-text-stroke:0.3px #050505;transform:scaleX(0.9705);transform-origin:0 50%;left:128.50px;word-spacing:-0.9px;">My Networking Goal This Week:</div>
<div class="t" style="top:224.70px;font-size:10.4px;color:#0a0a0a;-webkit-text-stroke:0.2px #0a0a0a;transform:scaleX(0.9262);transform-origin:0 50%;left:528.00px;word-spacing:-0.9px;">Week of:</div>
<div class="t" style="top:240.18px;font-size:11.6px;color:#3a3a3a;transform:scaleX(0.9306);transform-origin:0 50%;left:544.50px;">Mon</div>
<div class="t" style="top:240.18px;font-size:11.6px;color:#3a3a3a;transform:scaleX(0.8948);transform-origin:0 50%;left:603.50px;">Tue</div>
<div class="t" style="top:240.18px;font-size:11.6px;color:#3a3a3a;transform:scaleX(0.9094);transform-origin:0 50%;left:659.50px;">Wed</div>
<div class="t" style="top:240.18px;font-size:11.6px;color:#3a3a3a;transform:scaleX(0.8755);transform-origin:0 50%;left:718.50px;">Thu</div>
<div class="t" style="top:240.18px;font-size:11.6px;color:#3a3a3a;transform:scaleX(0.9241);transform-origin:0 50%;left:778.50px;">Fri</div>
<div class="t" style="top:254.39px;font-size:11.0px;color:#f6f6f6;-webkit-text-stroke:0.25px #f6f6f6;transform:scaleX(0.8420);transform-origin:0 50%;left:128.50px;word-spacing:-0.9px;">RESEARCH &amp; PREP</div>
<div class="t" style="top:313.85px;font-size:11.4px;color:#2a2a2a;-webkit-text-stroke:0.2px #2a2a2a;transform:scaleX(0.8754);transform-origin:0 50%;left:128.50px;">OUTREACH</div>
<div class="t" style="top:387.25px;font-size:11.4px;color:#2a2a2a;-webkit-text-stroke:0.2px #2a2a2a;transform:scaleX(0.8757);transform-origin:0 50%;left:128.50px;">ENGAGEMENT</div>
<div class="t" style="top:268.72px;font-size:10.9px;color:#262626;-webkit-text-stroke:0.22px #262626;transform:scaleX(0.9722);transform-origin:0 50%;left:128.50px;word-spacing:-0.9px;">Identified one target company</div>
<div class="t" style="top:282.82px;font-size:10.9px;color:#262626;-webkit-text-stroke:0.22px #262626;transform:scaleX(0.9721);transform-origin:0 50%;left:128.50px;word-spacing:-0.9px;">Identified one target contact (someone you want to meet)</div>
<div class="t" style="top:296.82px;font-size:10.9px;color:#262626;-webkit-text-stroke:0.22px #262626;transform:scaleX(0.9762);transform-origin:0 50%;left:128.50px;word-spacing:-0.9px;">Identified a connector (someone connected to your target contact)</div>
<div class="t" style="top:328.82px;font-size:10.9px;color:#262626;-webkit-text-stroke:0.22px #262626;transform:scaleX(0.9635);transform-origin:0 50%;left:128.50px;word-spacing:-0.9px;">Contacted former colleague or classmate</div>
<div class="t" style="top:342.62px;font-size:10.9px;color:#262626;-webkit-text-stroke:0.22px #262626;transform:scaleX(0.9803);transform-origin:0 50%;left:128.50px;word-spacing:-0.9px;">Sent LinkedIn connection request with personal note</div>
<div class="t" style="top:356.72px;font-size:10.9px;color:#262626;-webkit-text-stroke:0.22px #262626;transform:scaleX(0.9817);transform-origin:0 50%;left:128.50px;word-spacing:-0.9px;">Followed up with a new connection from prior 2 weeks</div>
<div class="t" style="top:370.72px;font-size:10.9px;color:#262626;-webkit-text-stroke:0.22px #262626;transform:scaleX(0.9760);transform-origin:0 50%;left:128.50px;word-spacing:-0.9px;">Asked a connector to make an introduction to a target contact</div>
<div class="t" style="top:401.52px;font-size:10.9px;color:#262626;-webkit-text-stroke:0.22px #262626;transform:scaleX(0.9650);transform-origin:0 50%;left:128.50px;word-spacing:-0.9px;">Shared a post, article, or made comment on social</div>
<div class="t" style="top:416.02px;font-size:10.9px;color:#262626;-webkit-text-stroke:0.22px #262626;transform:scaleX(0.9732);transform-origin:0 50%;left:128.50px;word-spacing:-0.9px;">Participated in an industry or professional event (virtual or in-person), online group</div>
<div class="t" style="top:430.32px;font-size:10.9px;color:#262626;-webkit-text-stroke:0.22px #262626;transform:scaleX(0.9771);transform-origin:0 50%;left:128.50px;word-spacing:-0.9px;">Scheduled informational interview</div>
<div class="t" style="top:444.42px;font-size:10.9px;color:#262626;-webkit-text-stroke:0.22px #262626;transform:scaleX(0.9830);transform-origin:0 50%;left:128.50px;word-spacing:-0.9px;">Conducted meeting (informational or job interview)</div>
<div class="t" style="top:474.12px;font-size:10.9px;color:#262626;-webkit-text-stroke:0.22px #262626;transform:scaleX(0.9581);transform-origin:0 50%;left:128.50px;word-spacing:-0.9px;">Self-Check: How did I do this week?</div></div><!-- ===== SHEET TABS ===== -->
<div class="abs" style="left:0;top:720.5px;width:1005px;height:22.5px;background:#323232"></div>
<div class="abs" style="left:0;top:741.6px;width:1005px;height:1.4px;background:#2e2e2e"></div>
<div class="abs" style="left:177.5px;top:720.5px;width:104px;height:20.5px;background:#232323"></div>
<div class="abs" style="left:45px;top:720.5px;width:132.5px;height:19.7px;background:#ffffff;border-radius:0 0 3px 3px"></div>
<div class="abs" style="left:281.5px;top:723px;width:1px;height:17px;background:#4a4a4a"></div>
<div class="abs" style="left:316px;top:723px;width:1px;height:17px;background:#4a4a4a"></div>
<svg class="abs" style="left:0;top:724px" width="40" height="16" viewBox="0 0 40 16"><path d="M11.6 3.4 v11.2 l-7.6 -5.6 Z M24 3.4 v11.2 l7.6 -5.6 Z" fill="#595959"/></svg>
<svg class="abs" style="left:292px;top:724.5px" width="14" height="14" viewBox="0 0 14 14" fill="none" stroke="#e8e8e8" stroke-width="1.7" stroke-linecap="round"><path d="M7 2.6 v8.8 M2.6 7 h8.8"/></svg>
<!-- ===== STATUS BAR ===== -->
<div class="abs" style="left:0;top:743.2px;width:1005px;height:12px;background:#3b3b3b"></div>
<div class="abs" style="left:729.5px;top:743.2px;width:32.5px;height:12px;background:#575757;border-radius:3px 3px 0 0"></div>
<svg class="abs" style="left:58px;top:744px" width="18" height="12" viewBox="0 0 18 12" fill="none" stroke="#e4e4e4" stroke-width="1.1" stroke-linecap="round" stroke-linejoin="round"><circle cx="9" cy="4.6" r="1.7"/><path d="M3 6.4 l4.4 1.6 v4 M15 6.4 l-4.4 1.6 v4"/><circle cx="4.6" cy="3.6" r="0.6"/><circle cx="13.4" cy="3.6" r="0.6"/></svg>
<svg class="abs" style="left:725px;top:743px" width="280" height="12" viewBox="725 743 280 12" fill="none" stroke="#ececec" stroke-width="1.15">
  <rect x="739.4" y="748.2" width="11.4" height="9"/><path d="M743.2 748.2 v9 M747 748.2 v9 M739.4 751.8 h11.4"/>
  <rect x="771.4" y="748.2" width="11" height="9"/><rect x="774" y="751" width="5.8" height="6"/>
  <rect x="803.4" y="748.2" width="11.4" height="9"/><path d="M809.1 748.2 v9 M806 748.2 v9" />
  <path d="M833.4 752.6 h5" stroke-width="1.5"/>
  <path d="M846 754 h88" stroke="#6a6a6a" stroke-width="2.4" stroke-linecap="round"/>
  <circle cx="890" cy="753.4" r="5.6" fill="#8e8e8e" stroke="none"/>
  <path d="M940 752.8 h6.4 M943.2 749.6 v6.4" stroke-width="1.5"/>
</svg>
<div class="tl"><div class="t" style="top:0.07px;font-size:10.2px;color:#dedede;-webkit-text-stroke:0.4px #dedede;letter-spacing:-0.029px;left:72.00px;">AutoSave</div>
<div class="t" style="top:0.28px;font-size:11.3px;color:#ededed;-webkit-text-stroke:0.4px #ededed;letter-spacing:-0.049px;left:438.00px;">Networking Checklist Excel</div>
<div class="t" style="top:0.08px;font-size:11.3px;color:#a6a6a6;font-weight:bold;letter-spacing:-0.145px;left:751.00px;">Search (Cmd + Ctrl + U)</div>
<div class="t" style="top:31.68px;font-size:11.9px;color:#ffffff;font-weight:bold;-webkit-text-stroke:0.15px #ffffff;letter-spacing:-0.016px;left:1.00px;">Home</div>
<div class="t" style="top:31.78px;font-size:11.6px;color:#ebebeb;-webkit-text-stroke:0.42px #ebebeb;letter-spacing:0.415px;left:55.00px;">Insert</div>
<div class="t" style="top:31.78px;font-size:11.6px;color:#ebebeb;-webkit-text-stroke:0.42px #ebebeb;letter-spacing:0.083px;left:109.60px;">Draw</div>
<div class="t" style="top:31.78px;font-size:11.6px;color:#ebebeb;-webkit-text-stroke:0.42px #ebebeb;letter-spacing:0.214px;left:159.00px;">Page Layout</div>
<div class="t" style="top:31.78px;font-size:11.6px;color:#ebebeb;-webkit-text-stroke:0.42px #ebebeb;letter-spacing:0.270px;left:249.50px;">Formulas</div>
<div class="t" style="top:31.78px;font-size:11.6px;color:#ebebeb;-webkit-text-stroke:0.42px #ebebeb;letter-spacing:0.124px;left:323.00px;">Data</div>
<div class="t" style="top:31.78px;font-size:11.6px;color:#ebebeb;-webkit-text-stroke:0.42px #ebebeb;letter-spacing:0.161px;left:369.00px;">Review</div>
<div class="t" style="top:31.78px;font-size:11.6px;color:#ebebeb;-webkit-text-stroke:0.42px #ebebeb;letter-spacing:0.267px;left:430.00px;">View</div>
<div class="t" style="top:31.78px;font-size:11.6px;color:#ebebeb;-webkit-text-stroke:0.42px #ebebeb;letter-spacing:0.356px;left:478.50px;">Automate</div>
<div class="t" style="top:33.18px;font-size:11.6px;color:#ffffff;-webkit-text-stroke:0.45px #ffffff;letter-spacing:0.177px;left:850.50px;">Comments</div>
<div class="t" style="top:33.18px;font-size:11.6px;color:#ffffff;-webkit-text-stroke:0.45px #ffffff;letter-spacing:-0.131px;left:952.00px;">Share</div>
<div class="t" style="top:88.67px;font-size:9.6px;color:#f0f0f0;-webkit-text-stroke:0.36px #f0f0f0;letter-spacing:-0.150px;left:9.20px;">Paste</div>
<div class="t" style="top:88.71px;font-size:9.5px;color:#f0f0f0;-webkit-text-stroke:0.36px #f0f0f0;letter-spacing:0.135px;left:447.70px;">Number</div>
<div class="t" style="top:58.71px;font-size:9.5px;color:#f0f0f0;-webkit-text-stroke:0.36px #f0f0f0;letter-spacing:0.278px;left:528.30px;">Conditional Formatting</div>
<div class="t" style="top:78.21px;font-size:9.5px;color:#f0f0f0;-webkit-text-stroke:0.36px #f0f0f0;letter-spacing:0.184px;left:528.30px;">Format as Table</div>
<div class="t" style="top:97.71px;font-size:9.5px;color:#f0f0f0;-webkit-text-stroke:0.36px #f0f0f0;letter-spacing:0.166px;left:528.30px;">Cell Styles</div>
<div class="t" style="top:88.71px;font-size:9.5px;color:#f0f0f0;-webkit-text-stroke:0.36px #f0f0f0;letter-spacing:0.177px;left:672.00px;">Cells</div>
<div class="t" style="top:88.71px;font-size:9.5px;color:#f0f0f0;-webkit-text-stroke:0.36px #f0f0f0;letter-spacing:0.293px;left:728.40px;">Editing</div>
<div class="t" style="top:88.71px;font-size:9.5px;color:#f0f0f0;-webkit-text-stroke:0.36px #f0f0f0;letter-spacing:0.298px;left:787.00px;">Add-ins</div>
<div class="t" style="top:88.64px;font-size:9.7px;color:#f0f0f0;-webkit-text-stroke:0.36px #f0f0f0;letter-spacing:-0.044px;left:843.60px;">Analyze</div>
<div class="t" style="top:99.21px;font-size:9.5px;color:#f0f0f0;-webkit-text-stroke:0.36px #f0f0f0;letter-spacing:-0.142px;left:851.30px;">Data</div>
<div class="t" style="top:88.71px;font-size:9.5px;color:#f0f0f0;-webkit-text-stroke:0.36px #f0f0f0;letter-spacing:0.218px;left:884.90px;">Copilot</div>
<div class="t" style="top:63.75px;font-size:11.1px;color:#f2f2f2;-webkit-text-stroke:0.4px #f2f2f2;letter-spacing:0.049px;left:98.30px;">Aptos Narrow (Bod...</div>
<div class="t" style="top:63.86px;font-size:10.8px;color:#f2f2f2;-webkit-text-stroke:0.4px #f2f2f2;letter-spacing:-0.856px;left:225.70px;">12</div>
<div class="t" style="top:91.98px;font-size:11.6px;color:#e8e8e8;font-weight:bold;left:100.20px;">B</div>
<div class="t" style="top:91.70px;font-size:12.4px;color:#e8e8e8;font-family:'Liberation Serif',serif;font-style:italic;left:124.20px;">I</div>
<div class="t" style="top:91.45px;font-size:11.4px;color:#e8e8e8;left:145.20px;">U</div>
<div class="t" style="top:55.28px;font-size:9.3px;color:#dcdcdc;left:400.60px;letter-spacing:-0.2px;">ab</div>
<div class="t" style="top:61.48px;font-size:9.0px;color:#dcdcdc;left:400.70px;">c</div>
<div class="t" style="top:98.14px;font-size:9.4px;color:#dcdcdc;left:393.40px;letter-spacing:-0.2px;transform:rotate(-47deg);transform-origin:0 70%;">ab</div>
<div class="t" style="top:122.86px;font-size:10.8px;color:#f4f4f4;-webkit-text-stroke:0.4px #f4f4f4;letter-spacing:-0.171px;left:1.00px;">C32</div>
<div class="t" style="top:122.94px;font-size:14.6px;color:#9a9a9a;font-family:'Liberation Serif',serif;font-style:italic;letter-spacing:0.682px;left:125.80px;">fx</div>
<div class="t" style="top:723.89px;font-size:10.7px;color:#3b8a58;font-weight:bold;letter-spacing:-0.041px;left:62.20px;">Template grayscale</div>
<div class="t" style="top:723.75px;font-size:11.1px;color:#a9a9a9;letter-spacing:0.023px;left:193.50px;">Template color</div>
<div class="t" style="top:745.33px;font-size:10.6px;color:#e2e2e2;-webkit-text-stroke:0.15px #e2e2e2;letter-spacing:-0.128px;left:13.00px;">Ready</div>
<div class="t" style="top:745.26px;font-size:10.8px;color:#e2e2e2;-webkit-text-stroke:0.15px #e2e2e2;letter-spacing:0.190px;left:80.00px;">Accessibility: Investigate</div>
<div class="t" style="top:745.33px;font-size:10.6px;color:#e2e2e2;-webkit-text-stroke:0.15px #e2e2e2;letter-spacing:0.222px;left:962.00px;">100%</div></div>
</body></html>
